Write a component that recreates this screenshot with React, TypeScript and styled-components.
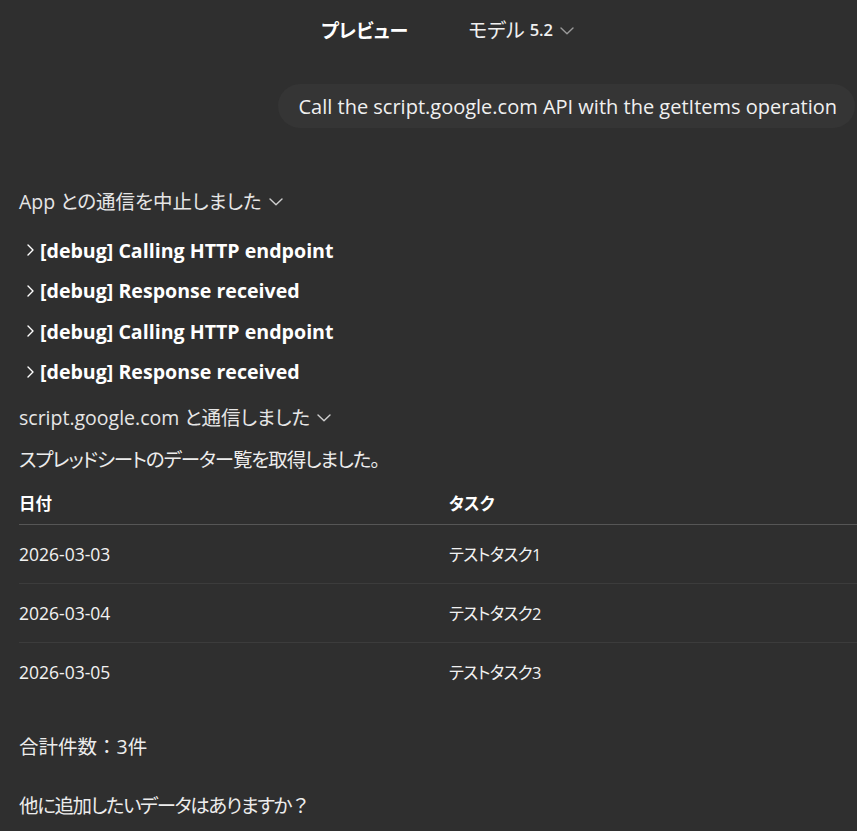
import React from "react";
import styled, { createGlobalStyle } from "styled-components";

const Global = createGlobalStyle`
  html, body { margin: 0; padding: 0; background: #2f2f2f; }
  body {
    font-family: "Open Sans", "Noto Sans", "Noto Sans CJK JP", sans-serif;
    color: #ececec;
    font-feature-settings: "palt";
  }
  * { box-sizing: border-box; }
`;

const Page = styled.div`
  width: 857px;
  height: 831px;
  overflow: hidden;
  background: #2f2f2f;
  display: flex;
  flex-direction: column;
`;

const Header = styled.header`
  height: 56px;
  padding-top: 2px;
  display: flex;
  align-items: center;
  justify-content: center;
  gap: 60px;
  padding-left: 38px;
`;

const Title = styled.div`
  font-family: "Noto Sans CJK JP", sans-serif;
  font-weight: 700;
  font-size: 19px;
  color: #fff;
`;

const Model = styled.div`
  display: flex;
  align-items: center;
  gap: 7px;
  font-family: "Noto Sans CJK JP", sans-serif;
  font-size: 20px;
  color: #f0f0f0;
`;

const Version = styled.span`
  font-family: "Open Sans", sans-serif;
  font-size: 16.5px;
  font-weight: 600;
  margin-left: -2px;
`;

const UserRow = styled.div`
  display: flex;
  justify-content: flex-end;
  padding-top: 28px;
  padding-right: 2px;
`;

const Bubble = styled.div`
  background: #353535;
  border-radius: 22px;
  height: 44px;
  display: flex;
  align-items: center;
  padding: 0 18px 0 21px;
  font-family: "Open Sans", sans-serif;
  font-size: 20px;
  color: #f0f0f0;
`;

const Body = styled.div`
  padding: 0 0 0 19px;
  display: flex;
  flex-direction: column;
`;

const Toggle = styled.div<{ $top: number }>`
  margin-top: ${(p) => p.$top}px;
  height: 30px;
  display: flex;
  align-items: center;
  gap: 7px;
  font-size: 19.5px;
  color: #e6e6e6;
`;

const DebugList = styled.div`
  display: flex;
  flex-direction: column;
  margin-top: 20px;
  gap: 10.5px;
`;

const DebugRow = styled.div`
  height: 30px;
  display: flex;
  align-items: center;
  gap: 6px;
  padding-left: 8px;
  font-weight: 700;
  font-size: 19.6px;
  color: #fff;
`;

const Para = styled.p<{ $top: number; $tight?: number }>`
  margin: ${(p) => p.$top}px 0 0;
  font-size: 19.5px;
  line-height: 30px;
  color: #ececec;
  letter-spacing: ${(p) => p.$tight ?? 0}px;
`;

const Wide = styled.span`
  font-feature-settings: normal;
  letter-spacing: 0;
`;

const Table = styled.div`
  margin-top: 7px;
  display: flex;
  flex-direction: column;
`;

const HeadRow = styled.div`
  display: grid;
  grid-template-columns: 430px 1fr;
  height: 43px;
  align-items: center;
  border-bottom: 1px solid #565656;
  font-family: "Noto Sans CJK JP", sans-serif;
  font-weight: 700;
  font-size: 16.5px;
  color: #fff;
`;

const Row = styled.div<{ $last?: boolean }>`
  display: grid;
  grid-template-columns: 430px 1fr;
  height: 59px;
  align-items: center;
  border-bottom: 1px solid ${(p) => (p.$last ? "transparent" : "#3c3c3c")};
  color: #f2f2f2;
`;

const DateCell = styled.div`
  font-family: "Open Sans", sans-serif;
  font-size: 17.5px;
`;

const TaskCell = styled.div`
  font-family: "Open Sans", "Noto Sans CJK JP", sans-serif;
  font-size: 16.5px;
  letter-spacing: -0.6px;
`;

const HeadCell = styled.div``;

const ChevronDown = ({ color }: { color: string }) => (
  <svg width="14" height="8" viewBox="0 0 14 8" fill="none" stroke={color} strokeWidth="1.4" strokeLinecap="round" strokeLinejoin="round">
    <path d="M1 1 L7 6.8 L13 1" />
  </svg>
);

const ChevronRight = () => (
  <svg width="7" height="12" viewBox="0 0 7 12" fill="none" stroke="#ffffff" strokeWidth="1.4" strokeLinecap="round" strokeLinejoin="round">
    <path d="M1 1 L6 6 L1 11" />
  </svg>
);

const ChevronSlot = styled.span`
  display: inline-flex;
  margin-top: 3px;
`;

const rows = [
  ["2026-03-03", "テストタスク1"],
  ["2026-03-04", "テストタスク2"],
  ["2026-03-05", "テストタスク3"],
];

const debug = [
  "[debug] Calling HTTP endpoint",
  "[debug] Response received",
  "[debug] Calling HTTP endpoint",
  "[debug] Response received",
];

export default function App() {
  return (
    <Page>
      <Global />
      <Header>
        <Title>プレビュー</Title>
        <Model>
          モデル <Version>5.2</Version>
          <ChevronSlot>
            <ChevronDown color="#9a9a9a" />
          </ChevronSlot>
        </Model>
      </Header>
      <UserRow>
        <Bubble>Call the script.google.com API with the getItems operation</Bubble>
      </UserRow>
      <Body>
        <Toggle $top={57}>
          App との通信を中止しました
          <ChevronSlot>
            <ChevronDown color="#cfcfcf" />
          </ChevronSlot>
        </Toggle>
        <DebugList>
          {debug.map((d, i) => (
            <DebugRow key={i}>
              <ChevronRight />
              {d}
            </DebugRow>
          ))}
        </DebugList>
        <Toggle $top={15}>
          script.google.com と通信しました
          <ChevronSlot>
            <ChevronDown color="#cfcfcf" />
          </ChevronSlot>
        </Toggle>
        <Para $top={13} $tight={-1.1}>
          スプレッドシートのデーター覧を取得しました。
        </Para>
        <Table>
          <HeadRow>
            <HeadCell>日付</HeadCell>
            <HeadCell>タスク</HeadCell>
          </HeadRow>
          {rows.map((r, i) => (
            <Row key={i} $last={i === rows.length - 1}>
              <DateCell>{r[0]}</DateCell>
              <TaskCell>{r[1]}</TaskCell>
            </Row>
          ))}
        </Table>
        <Para $top={30}>
          合計件数<Wide>：</Wide>3件
        </Para>
        <Para $top={29} $tight={-1.4}>
          他に追加したいデータはありますか<Wide>？</Wide>
        </Para>
      </Body>
    </Page>
  );
}
